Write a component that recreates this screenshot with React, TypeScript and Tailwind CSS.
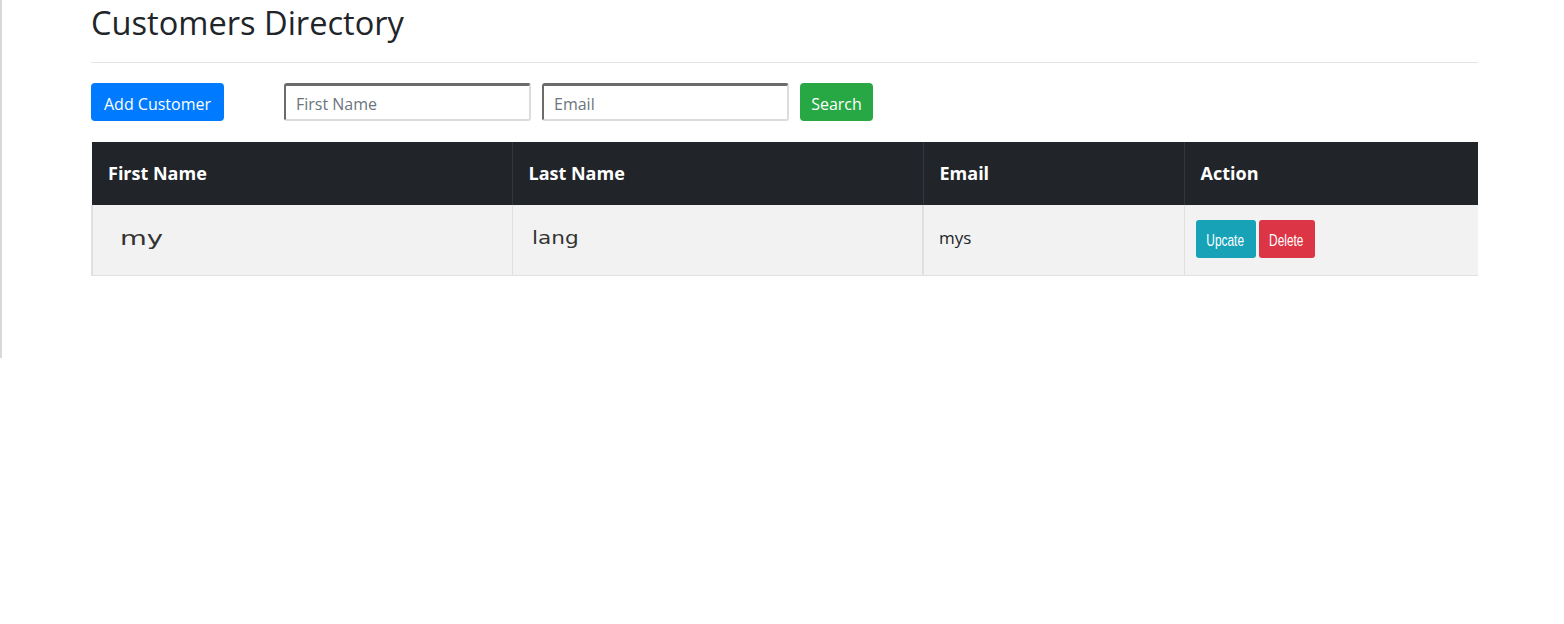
export default function App() {
  return (
    <div className="min-h-[624px] bg-white font-['Open_Sans',sans-serif] text-[#212529]">
      <div className="h-[358px] border-l-2 border-[#d9d9d9]">
        <div className="ml-[89px] w-[1387px]">
          <h1 className="pt-[3px] text-[32.6px] leading-[40px] text-[#212529]">Customers Directory</h1>
          <hr className="mt-[19px] border-t border-[#e5e5e5]" />
          <div className="mt-[20px] flex items-center">
            <button className="h-[38px] w-[133px] rounded-[4px] bg-[#007bff] pt-[3px] text-[16px] text-white">
              Add Customer
            </button>
            <input
              placeholder="First Name"
              className="ml-[60px] h-[38px] w-[247px] rounded-[3px] border-2 border-t-[3px] border-t-[#6b6b6b] border-l-[#6b6b6b] border-r-[#dcdcdc] border-b-[#dcdcdc] px-[10px] pt-[3px] text-[16px] placeholder:text-[#6c757d]"
            />
            <input
              placeholder="Email"
              className="ml-[11px] h-[38px] w-[247px] rounded-[3px] border-2 border-t-[3px] border-t-[#6b6b6b] border-l-[#6b6b6b] border-r-[#dcdcdc] border-b-[#dcdcdc] px-[10px] pt-[3px] text-[16px] placeholder:text-[#6c757d]"
            />
            <button className="ml-[11px] h-[38px] w-[73px] rounded-[4px] bg-[#28a745] pt-[3px] text-[16px] text-white">
              Search
            </button>
          </div>
          <table className="mt-[21px] w-full table-fixed border-collapse">
            <thead>
              <tr className="h-[63px] bg-[#212529] text-left text-[18px] font-bold text-white">
                <th className="w-[420px] border-r border-[#32383e] px-[16px]">First Name</th>
                <th className="w-[411px] border-r border-[#32383e] px-[16px]">Last Name</th>
                <th className="w-[261px] border-r border-[#32383e] px-[16px]">Email</th>
                <th className="px-[16px]">Action</th>
              </tr>
            </thead>
            <tbody>
              <tr className="h-[70px] border-b border-[#dee2e6] bg-[#f2f2f2] text-[18px] text-[#212529]">
                <td className="border-l-2 border-r border-[#e0e0e0] pl-[27px] pb-[4px] font-['DejaVu_Sans',sans-serif] text-[19px] text-[#333]">
                  <span className="inline-block origin-left scale-x-[145%]">my</span>
                </td>
                <td className="border-r-2 border-[#e0e0e0] pl-[19px] pb-[4px] font-['DejaVu_Sans',sans-serif] text-[18px] text-[#333]">
                  <span className="inline-block origin-left scale-x-[120%]">lang</span>
                </td>
                <td className="border-r border-[#e0e0e0] pl-[15px] pb-[4px] text-[17px]">mys</td>
                <td className="pl-[11px] pb-[2px]">
                  <div className="flex gap-[3px]">
                    <button className="h-[38px] w-[60px] rounded-[3px] bg-[#17a2b8] pt-[3px] font-['Liberation_Sans',sans-serif] text-[14px] text-white">
                      <span className="inline-block scale-x-[85%] scale-y-[115%]">Upcate</span>
                    </button>
                    <button className="h-[38px] w-[56px] rounded-[3px] bg-[#dc3545] pt-[3px] font-['Liberation_Sans',sans-serif] text-[14px] text-white">
                      <span className="inline-block scale-x-[85%] scale-y-[115%]">Delete</span>
                    </button>
                  </div>
                </td>
              </tr>
            </tbody>
          </table>
        </div>
      </div>
    </div>
  )
}
